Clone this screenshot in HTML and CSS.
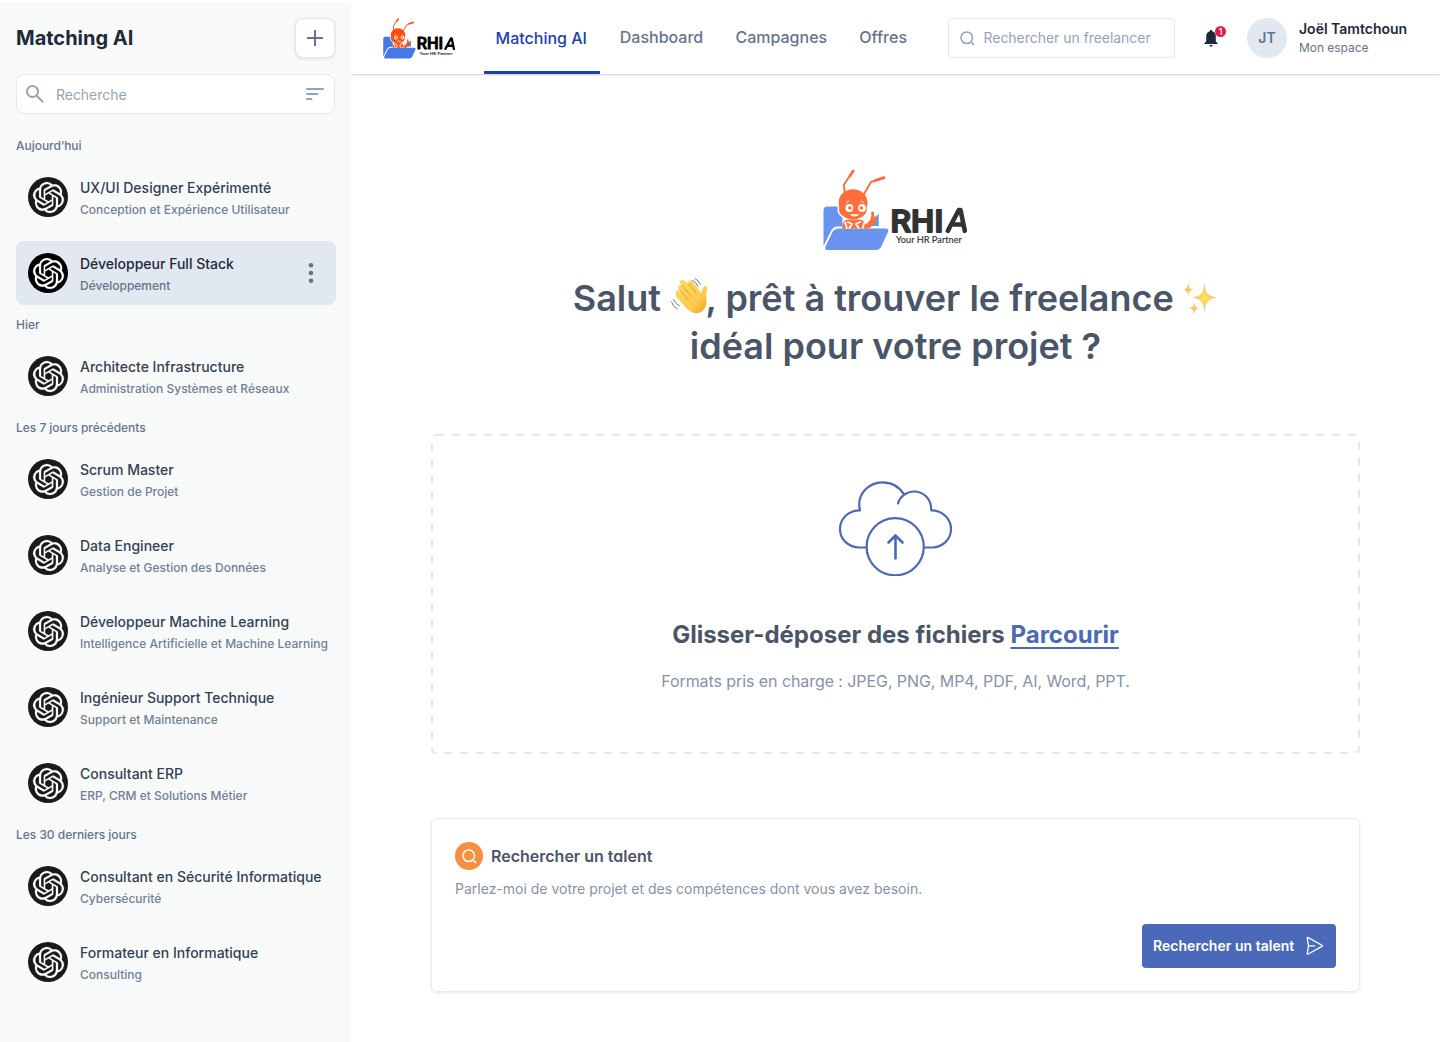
FILE: index.html
```html
<!DOCTYPE html>
<html lang="fr">
<head>
<meta charset="utf-8">
<title>Matching AI</title>
<link rel="stylesheet" href="styles.css">
</head>
<body>
<svg class="defs" aria-hidden="true">
  <symbol id="gpt" viewBox="0 0 24 24" overflow="visible"><path d="M22.2819 9.8211a5.9847 5.9847 0 0 0-.5157-4.9108 6.0462 6.0462 0 0 0-6.5098-2.9A6.0651 6.0651 0 0 0 4.9807 4.1818a5.9847 5.9847 0 0 0-3.9977 2.9 6.0462 6.0462 0 0 0 .7427 7.0966 5.98 5.98 0 0 0 .511 4.9107 6.051 6.051 0 0 0 6.5146 2.9001A5.9847 5.9847 0 0 0 13.2599 24a6.0557 6.0557 0 0 0 5.7718-4.2058 5.9894 5.9894 0 0 0 3.9977-2.9001 6.0557 6.0557 0 0 0-.7475-7.0729zm-9.022 12.6081a4.4755 4.4755 0 0 1-2.8764-1.0408l.1419-.0804 4.7783-2.7582a.7948.7948 0 0 0 .3927-.6813v-6.7369l2.02 1.1686a.071.071 0 0 1 .038.052v5.5826a4.504 4.504 0 0 1-4.4945 4.4944zm-9.6607-4.1254a4.4708 4.4708 0 0 1-.5346-3.0137l.142.0852 4.783 2.7582a.7712.7712 0 0 0 .7806 0l5.8428-3.3685v2.3324a.0804.0804 0 0 1-.0332.0615L9.74 19.9502a4.4992 4.4992 0 0 1-6.1408-1.6464zM2.3408 7.8956a4.485 4.485 0 0 1 2.3655-1.9728V11.6a.7664.7664 0 0 0 .3879.6765l5.8144 3.3543-2.0201 1.1685a.0757.0757 0 0 1-.071 0l-4.8303-2.7865A4.504 4.504 0 0 1 2.3408 7.872zm16.5963 3.8558L13.1038 8.364 15.1192 7.2a.0757.0757 0 0 1 .071 0l4.8303 2.7913a4.4944 4.4944 0 0 1-.6765 8.1042v-5.6772a.79.79 0 0 0-.407-.667zm2.0107-3.0231l-.142-.0852-4.7735-2.7818a.7759.7759 0 0 0-.7854 0L9.409 9.2297V6.8974a.0662.0662 0 0 1 .0284-.0615l4.8303-2.7866a4.4992 4.4992 0 0 1 6.6802 4.66zM8.3065 12.863l-2.02-1.1638a.0804.0804 0 0 1-.038-.0567V6.0742a4.4992 4.4992 0 0 1 7.3757-3.4537l-.142.0805L8.704 5.459a.7948.7948 0 0 0-.3927.6813zm1.0976-2.3654l2.602-1.4998 2.6069 1.4998v2.9994l-2.5974 1.4997-2.6067-1.4997Z"/></symbol>
  <symbol id="lens" viewBox="0 0 16 16"><circle cx="7.2" cy="7.2" r="6.200" fill="none" stroke="currentColor" stroke-width="1.600"/><path d="M12.300 12.300l2.600 2.600" stroke="currentColor" stroke-width="1.800"/></symbol>
  <symbol id="rhia" viewBox="0 0 146 82">
    <path d="M.5 41.5q0-4 4-4h15v20h-6Q10 58 8 62L.5 77zM44 56l11.7-11V57H44z" fill="#4479ea"/>
    <path d="M16 59.500h46.500q4 0 2.500 3.500l-6.500 14q-1.500 4-6 4H4.500q-3.500 0-2-3.500l7-14.500q1.800-3.500 6.500-3.500z" fill="#4479ea"/>
    <path d="M30 20.300c-8 0-14.300 5.800-14.300 13.200 0 3 .8 4.700.4 7.500-.5 4 6.500 9.500 13.900 9.500s14-5.500 13.700-9.500c-.2-2.800.8-4.500.8-7.500 0-7.400-6.500-13.200-14.500-13.200z" fill="#ff4b0a" stroke="#fff" stroke-width="3"/>
    <path d="M22 24.500l-1.300-8.500L30 2M41 25l7-12 13-4" fill="none" stroke="#ff4b0a" stroke-width="1.900" stroke-linejoin="round" stroke-linecap="round"/>
    <path d="M27 6.800L30.300 2M52 11.500l9-2.900" stroke="#ff4b0a" stroke-width="2.800" stroke-linecap="round"/>
    <path d="M30 20.300c-8 0-14.300 5.800-14.300 13.200 0 3 .8 4.700.4 7.500-.5 4 6.500 9.500 13.900 9.500s14-5.500 13.700-9.500c-.2-2.800.8-4.500.8-7.500 0-7.400-6.500-13.200-14.500-13.200z" fill="#ff4b0a"/>
    <path d="M19 59.500q0-7 5-9h13q5 1 6 5l4.500-5 1-8 2.500.5v4l3 2-3 6.500-5 4z" fill="#ff4b0a"/>
    <path d="M24 52.500l5 2.500-3 4.500M38 52.500l-5 2.500 3 4.500M22 53l2 6.500M41.500 53l-2 6.500M48 46l-5 8" fill="none" stroke="#fff" stroke-width="1.800"/>
    <circle cx="26.300" cy="39" r="3.900" fill="#fff"/><circle cx="39" cy="39" r="3.900" fill="#fff"/>
    <circle cx="26.900" cy="39" r="1.800" fill="#ff4b0a"/><circle cx="38.400" cy="39" r="1.800" fill="#ff4b0a"/>
    <path d="M26.500 45.300q5.500 4.500 10 0z" fill="#fff"/><path d="M23 33.500l3-1.500M38 32l3 1.500" stroke="#fff" stroke-width=".8"/>
    <path d="M124.800 61.800l11-20.800h1.700l4.300 20.800M131 55.500h8" fill="none" stroke="#000" stroke-width="4.600" stroke-linecap="round" stroke-linejoin="round"/>
  </symbol>
</svg>

<div class="app">
  <aside class="sidebar">
    <div class="side-head">
      <h2>Matching AI</h2>
      <button class="add" aria-label="Ajouter"><svg width="16" height="16" viewBox="0 0 16 16"><path d="M8 0v16M0 8h16" stroke="#64748b" stroke-width="2"/></svg></button>
    </div>
    <div class="side-search">
      <svg width="18" height="18" viewBox="0 0 18 18" fill="none" stroke="#94a3b8" stroke-width="2"><circle cx="6.500" cy="6.500" r="5.500"/><path d="M10.500 10.500l6.700 6.700"/></svg>
      <span>Recherche</span>
      <svg width="18" height="12" viewBox="0 0 18 12" stroke="#94a3b8" stroke-width="2" stroke-linecap="round"><path d="M1 1h16M1 6h10.500M1 11h4.500"/></svg>
    </div>
    <section><h3>Aujourd‘hui</h3>
      <div class="item"><i class="av"><svg><use href="#gpt"/></svg></i><div><b>UX/UI Designer Expérimenté</b><span>Conception et Expérience Utilisateur</span></div></div>
      <div class="item active"><i class="av"><svg><use href="#gpt"/></svg></i><div><b>Développeur Full Stack</b><span>Développement</span></div><svg class="dots" width="6" height="20" viewBox="0 0 6 20" fill="#64748b"><circle cx="3" cy="2.300" r="2.300"/><circle cx="3" cy="10" r="2.300"/><circle cx="3" cy="17.700" r="2.300"/></svg></div>
    </section>
    <section><h3>Hier</h3>
      <div class="item"><i class="av"><svg><use href="#gpt"/></svg></i><div><b>Architecte Infrastructure</b><span>Administration Systèmes et Réseaux</span></div></div>
    </section>
    <section><h3>Les 7 jours précédents</h3>
      <div class="item"><i class="av"><svg><use href="#gpt"/></svg></i><div><b>Scrum Master</b><span>Gestion de Projet</span></div></div>
      <div class="item"><i class="av"><svg><use href="#gpt"/></svg></i><div><b>Data Engineer</b><span>Analyse et Gestion des Données</span></div></div>
      <div class="item"><i class="av"><svg><use href="#gpt"/></svg></i><div><b>Développeur Machine Learning</b><span>Intelligence Artificielle et Machine Learning</span></div></div>
      <div class="item"><i class="av"><svg><use href="#gpt"/></svg></i><div><b>Ingénieur Support Technique</b><span>Support et Maintenance</span></div></div>
      <div class="item"><i class="av"><svg><use href="#gpt"/></svg></i><div><b>Consultant ERP</b><span>ERP, CRM et Solutions Métier</span></div></div>
    </section>
    <section><h3>Les 30 derniers jours</h3>
      <div class="item"><i class="av"><svg><use href="#gpt"/></svg></i><div><b>Consultant en Sécurité Informatique</b><span>Cybersécurité</span></div></div>
      <div class="item"><i class="av"><svg><use href="#gpt"/></svg></i><div><b>Formateur en Informatique</b><span>Consulting</span></div></div>
    </section>
  </aside>

  <div class="page">
    <header class="topbar">
      <svg class="logo-small" viewBox="0 0 146 82"><use href="#rhia"/><text class="logo-name" x="67.500" y="62.500" textLength="53" lengthAdjust="spacingAndGlyphs">RHI</text><text class="logo-tag" x="73" y="73.500" textLength="66" lengthAdjust="spacingAndGlyphs">Your HR Partner</text></svg>
      <nav><a class="on">Matching AI</a><a>Dashboard</a><a>Campagnes</a><a>Offres</a></nav>
      <div class="top-search"><svg width="15" height="15"><use href="#lens"/></svg><span>Rechercher un freelancer</span></div>
      <div class="bell">
        <svg width="14" height="17" viewBox="0 0 14 17" fill="#1e293b"><path d="M7 0c.8 0 1.200.5 1.200 1.200 2.300.6 3.600 2.500 3.600 4.900v5.200l1.500 1.600q.5.500.5 1.100H.2q0-.6.5-1.100l1.500-1.600V6.100c0-2.400 1.300-4.300 3.600-4.900C5.800.5 6.200 0 7 0zM5.300 15h3.400q-.3 1.700-1.700 1.700T5.300 15z"/></svg>
        <span class="badge">1</span>
      </div>
      <div class="user-av">JT</div>
      <div class="user"><b>Joël Tamtchoun</b><span>Mon espace</span></div>
    </header>

    <main>
      <svg class="logo-big" viewBox="0 0 146 82"><use href="#rhia"/><text class="logo-name" x="67.500" y="62.500" textLength="53" lengthAdjust="spacingAndGlyphs">RHI</text><text class="logo-tag" x="73" y="73.500" textLength="66" lengthAdjust="spacingAndGlyphs">Your HR Partner</text></svg>
      <h1><span>Salut <svg class="wave" viewBox="0 0 38 38">
        <defs><linearGradient id="skin" x1="0" y1="0" x2="1" y2="1"><stop offset="0" stop-color="#ffd861"/><stop offset=".65" stop-color="#fdcb4e"/><stop offset="1" stop-color="#eda324"/></linearGradient></defs>
        <path d="M6 18.500l8 9q6 7.500 12 7.800c7 .3 11.300-6.500 10.500-13.500L36 17l1.300-6.500q.3-2.500-1.800-2.600-2.300 0-3 3l-1.200 4L22.500 3.500q-1.800-2-3.600-.6-1.300 1.200 0 3L14 2.600q-1.800-1.500-3.400-.2-1.300 1.500 0 3.400l1.300 1.700q-1.700-1.200-3.200.1-1.200 1.500.2 3.500L12 15l-2.200-1.800q-1.900-1.300-3.300 0-1.800 1.800-.5 5.300z" fill="url(#skin)"/>
        <path d="M18.800 5.800l7.200 9M11.800 7.500l10 11.200M9 11.200L18.500 22" fill="none" stroke="#dc9423" stroke-width=".8" stroke-linecap="round"/>
        <path d="M22.500 2.500q4 1.500 5.500 6M25 .5q4 2 5.500 6M1.500 24q1.500 5 6 7M3.500 21.500q2 4.500 6 6.500" fill="none" stroke="#777b80" stroke-width="1" stroke-linecap="round"/>
      </svg>, prêt à trouver le freelance <svg class="spark" viewBox="0 0 34 34">
        <defs><radialGradient id="star"><stop offset="0" stop-color="#ffe45c"/><stop offset=".5" stop-color="#fbd05c"/><stop offset="1" stop-color="#f6b878"/></radialGradient></defs>
        <path fill="url(#star)" d="M21.500 0c.8 10 2.500 14 12 15.500-9.500 1.500-11.200 5.500-12 16-.8-10.500-2.500-14.500-12-16 9.500-1.500 11.200-5.500 12-15.500z"/>
        <path fill="url(#star)" d="M5.300 0c.4 5.200 1.300 7 5.200 7.700-3.900.7-4.800 2.500-5.200 7.300-.4-4.800-1.300-6.600-5.200-7.300C4 7 4.900 5.200 5.300 0zM11 19c.4 5 1.300 6.500 5.200 7.200-3.900.7-4.800 2.200-5.200 7.300-.4-5.100-1.300-6.600-5.200-7.300C9.700 25.500 10.600 24 11 19z"/>
      </svg></span><span>idéal pour votre projet ?</span></h1>

      <div class="drop">
        <svg class="dash"><rect x="1" y="1" width="927" height="318" rx="4" fill="none" stroke="#e2e8f0" stroke-width="2" stroke-dasharray="8 8"/></svg>
        <svg class="cloud" width="114" height="96" viewBox="0 0 114 96" fill="none" stroke="#4a69b9" stroke-width="2.200" stroke-linecap="round" stroke-linejoin="round">
          <path d="M28 67.500h-6.500C10.500 67.500 2 59.300 2 48.900S10.500 30.300 22 30.300C18 14.300 31 2.300 44.500 2.300c9 0 17 4.600 21.500 12.200"/>
          <path d="M60 23.500C61.700 16.500 68.700 11.500 76.200 11.500c9.500 0 17.500 8 17 18.800 11 0 19.800 8.200 19.800 18.600S104.500 67.500 94 67.500h-8"/>
          <circle cx="57.200" cy="66.700" r="28.600"/><path d="M57.500 78.500V56M50.500 62.500l7-7 7 7" stroke-width="2.600"/>
        </svg>
        <p class="drop-title">Glisser-déposer des fichiers <a>Parcourir</a></p>
        <p class="drop-sub">Formats pris en charge : JPEG, PNG, MP4, PDF, AI, Word, PPT.</p>
      </div>

      <div class="card">
        <div class="card-head"><i><svg width="15" height="15"><use href="#lens"/></svg></i><h4>Rechercher un talent</h4></div>
        <p>Parlez-moi de votre projet et des compétences dont vous avez besoin.</p>
        <button class="cta"><span>Rechercher un talent</span><svg width="18" height="20" viewBox="0 0 18 20" fill="none" stroke="#fff" stroke-width="1.300" stroke-linejoin="round" stroke-linecap="round"><path d="M2.600 9.800L1.200 2.300Q1 1.100 2.200 1.600l13.800 7.600q.9.600 0 1.200L2.200 18q-1.200.6-1-.7zM2.600 9.800h6"/></svg></button>
      </div>
    </main>
  </div>
</div>
</body>
</html>
```
FILE: styles.css
```css
* { box-sizing: border-box; margin: 0; padding: 0; }
body { font-family: Inter, "Liberation Sans", sans-serif; background: #fff; color: #475569; overflow: hidden; }
button { font: inherit; border: 0; }
i { font-style: normal; }
svg { display: block; flex: none; }
.defs { position: absolute; width: 0; height: 0; }
.app { display: flex; width: 1440px; height: 1042px; padding-top: 2px; }

.sidebar { width: 351px; flex: none; background: #f8faf9; padding: 16px 16px 0 16px; }
.side-head { display: flex; justify-content: space-between; height: 40px; }
.side-head h2 { font-size: 20px; line-height: 40px; font-weight: 700; color: #1e293b; }
.add { width: 40px; height: 40px; background: #fff; border: 1px solid #e2e8f0; border-radius: 8px; display: flex; align-items: center; justify-content: center; box-shadow: 0 1px 3px rgba(15, 23, 42, .12); }
.side-search { display: flex; align-items: center; height: 40px; margin: 16px 0 24px; padding: 0 10px 0 9px; background: #fff; border: 1px solid #e2e8f0; border-radius: 8px; font-size: 14px; letter-spacing: -.04px; color: #94a3b8; }
.side-search span { flex: 1; margin-left: 12px; }
.sidebar section { display: flex; flex-direction: column; gap: 12px; margin-bottom: 12px; }
.sidebar h3 { font-size: 12px; line-height: 15px; font-weight: 500; letter-spacing: -.03px; color: #64748b; }
.item { display: flex; align-items: center; gap: 12px; width: 320px; height: 64px; padding: 0 12px; border-radius: 8px; }
.item > div { flex: 1; padding-top: 3px; white-space: nowrap; }
.item b { display: block; font-size: 14px; line-height: 22px; font-weight: 500; color: #334155; }
.item span { display: block; margin-top: 1px; font-size: 12px; line-height: 20px; font-weight: 500; color: #718096; }
.item.active { background: #e2e8f0; }
.item.active b { color: #1e293b; }
.item.active span { color: #64748b; }
.dots { margin-right: 10px; }
.av { width: 40px; height: 40px; border-radius: 50%; background: #1a1a1a; display: flex; align-items: center; justify-content: center; flex: none; }
.av svg { width: 31px; height: 31px; fill: #fff; stroke: #fff; stroke-width: .15; overflow: visible; }
.active .av { background: #000; }

.page { flex: 1; min-width: 0; }
.topbar { display: flex; align-items: center; height: 72px; padding-left: 32px; background: #fff; box-shadow: 0 1px 1px rgba(0, 0, 0, .12), 0 2px 6px rgba(0, 0, 0, .05); clip-path: inset(0 0 -10px 0); }
.logo-small { width: 73px; height: 41px; }
.logo-name { font: 500 32px Roboto, sans-serif; stroke: #000; stroke-width: 1.8; stroke-linejoin: round; }
.logo-tag { font: 500 8.5px Lato, sans-serif; stroke: #000; stroke-width: .1; }
nav { display: flex; margin-left: 27.6px; height: 72px; gap: 8.2px; }
nav a { padding: 0 12px; line-height: 71px; font-size: 16px; font-weight: 500; color: #64748b; }
nav a.on { color: #1e40af; line-height: 73px; border-bottom: 3px solid #1e40af; height: 72px; width: 116px; }
.top-search { display: flex; align-items: center; gap: 9px; width: 227px; height: 40px; margin-left: auto; padding: 0 11px 0 10.500px; border: 1px solid #e2e8f0; border-radius: 4px; font-size: 14px; letter-spacing: -.04px; line-height: 18px; color: #94a3b8; white-space: nowrap; }
.top-search span { padding-bottom: 1px; }
.bell { position: relative; margin-left: 29px; }
.badge { position: absolute; left: 11px; top: -4px; width: 11px; height: 11px; border-radius: 50%; background: #e11d48; color: #fff; font-size: 9px; line-height: 11px; text-align: center; font-weight: 500; }
.user-av { width: 40px; height: 40px; margin-left: 29px; border-radius: 50%; background: #e2e8f0; color: #64748b; font-size: 14px; font-weight: 600; line-height: 40px; text-align: center; }
.user { width: 141px; margin-left: 12px; padding-bottom: 2px; white-space: nowrap; }
.user b { display: block; font-size: 14px; line-height: 20px; font-weight: 600; color: #1e293b; }
.user span { display: block; font-size: 12px; line-height: 17px; color: #64748b; letter-spacing: -.05px; }

main { display: flex; flex-direction: column; align-items: center; padding: 95px 0 0 0; }
.logo-big { width: 146px; height: 82px; opacity: .8; }
h1 { margin-top: 23px; font-size: 36px; line-height: 48px; font-weight: 600; color: #4a5568; text-align: center; white-space: nowrap; }
h1 span { display: block; }
h1 svg { display: inline-block; vertical-align: -5px; }
.wave { width: 38px; height: 38px; margin: 0 -2px 0 -.5px; }
.spark { width: 34px; height: 34px; margin-right: 1.500px; }
.drop { position: relative; width: 929px; height: 320px; margin-top: 64px; display: flex; flex-direction: column; align-items: center; }
.dash { position: absolute; inset: 0; width: 929px; height: 320px; }
.cloud { margin: 46px 1px 0 0; }
.drop-title { margin-top: 43px; font-size: 24px; line-height: 32px; font-weight: 700; letter-spacing: 0; color: #4a5568; }
.drop-title a { color: #4a69b9; text-decoration: underline; text-decoration-thickness: 2px; text-underline-offset: 4px; text-decoration-skip-ink: none; }
.drop-sub { margin-top: 18px; font-size: 16px; line-height: 24px; letter-spacing: -.075px; color: #8593a8; }
.card { width: 929px; height: 174px; margin-top: 64px; padding: 23px; border: 1px solid #e9edf3; border-radius: 6px; box-shadow: 0 1px 3px rgba(15, 23, 42, .1); display: flex; flex-direction: column; }
.card-head { display: flex; align-items: center; gap: 8px; }
.card-head i { width: 28px; height: 28px; border-radius: 50%; background: #f68f40; color: #fff; display: flex; align-items: center; justify-content: center; }
.card h4 { font-size: 16px; font-weight: 600; color: #4a5568; font-feature-settings: "cv11"; }
.card p { font-size: 14px; line-height: 20px; margin-top: 9px; color: #8593a8; }
.cta { display: flex; align-items: center; justify-content: space-between; align-self: flex-end; width: 194px; height: 44px; margin-top: 25px; padding: 0 12px 0 11px; border-radius: 4px; background: #4a69b9; color: #fff; font-size: 14px; font-weight: 600; letter-spacing: .03px; }
.cta span { padding-bottom: 2px; }
```
